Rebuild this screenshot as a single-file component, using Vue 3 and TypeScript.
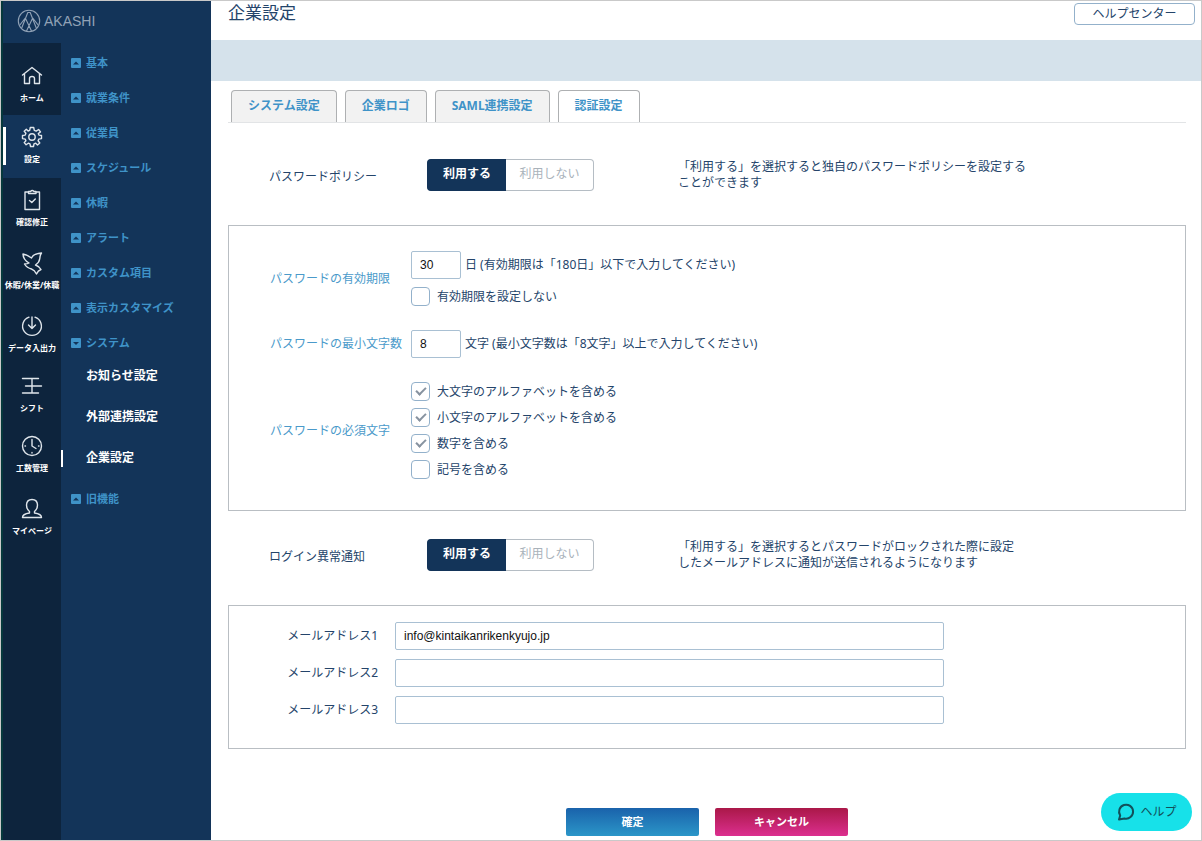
<script setup lang="ts">
import { ref } from 'vue'

interface RailItem {
  label: string
  icon: string
  kind?: 'first' | 'active' | 'compact'
}

interface CharRule {
  label: string
  checked: boolean
}

const railItems: RailItem[] = [
  { label: 'ホーム', icon: 'home', kind: 'first' },
  { label: '設定', icon: 'gear', kind: 'active' },
  { label: '確認修正', icon: 'clipboard' },
  { label: '休暇/休業/休職', icon: 'bird' },
  { label: 'データ入出力', icon: 'download', kind: 'compact' },
  { label: 'シフト', icon: 'shift', kind: 'compact' },
  { label: '工数管理', icon: 'clock' },
  { label: 'マイページ', icon: 'person' },
]

const groups: string[] = [
  '基本',
  '就業条件',
  '従業員',
  'スケジュール',
  '休暇',
  'アラート',
  'カスタム項目',
  '表示カスタマイズ',
  'システム',
  '旧機能',
]
const openGroup = 'システム'
const systemPages: string[] = ['お知らせ設定', '外部連携設定', '企業設定']
const currentPage = '企業設定'

const tabs: string[] = ['システム設定', '企業ロゴ', 'SAML連携設定', '認証設定']
const activeTab = ref('認証設定')

const usePolicy = ref(true)
const useAlert = ref(true)
const expiryDays = ref('30')
const noExpiry = ref(false)
const minLength = ref('8')
const charRules = ref<CharRule[]>([
  { label: '大文字のアルファベットを含める', checked: true },
  { label: '小文字のアルファベットを含める', checked: true },
  { label: '数字を含める', checked: true },
  { label: '記号を含める', checked: false },
])
const mails = ref<string[]>(['info@kintaikanrikenkyujo.jp', '', ''])
</script>

<template>
  <div class="frame">
    <aside class="sidebar">
      <a class="brand" href="#">
        <svg width="24" height="24" viewBox="0 0 24 24" fill="none" stroke="currentColor" stroke-width="1.1" stroke-linejoin="round" aria-hidden="true">
          <circle cx="12" cy="12" r="10.7" />
          <path d="M4.500 19.500 L10.800 3.500 H13.200 L19.500 19.500 M2.500 16.500 L8.300 9 L14.500 22 M21.500 16.500 L15.700 9 L9.500 22" />
        </svg>
        <span>AKASHI</span>
      </a>
      <div class="navs">
        <nav class="rail" aria-label="メイン">
          <a v-for="item in railItems" :key="item.label" href="#" class="rail-item" :class="item.kind">
            <svg class="rail-icon" width="24" height="24" viewBox="0 0 24 24" fill="none" stroke="currentColor" stroke-width="1.4" stroke-linejoin="round" stroke-linecap="round" aria-hidden="true">
              <path v-if="item.icon === 'home'" d="M2.500 11 L12 3.500 L21.500 11 M4.500 9.700 V19.500 H9.500 V14.500 Q9.500 12.500 12 12.500 Q14.500 12.500 14.500 14.500 V19.500 H19.500 V9.700" />
              <template v-else-if="item.icon === 'gear'">
                <circle cx="12" cy="12" r="3.200" />
                <path d="M10.300 2.500 H13.700 L14.300 5.300 L16.200 6.100 L18.600 4.500 L20.500 6.900 L18.300 8.500 L18.900 10.100 L21.500 10.500 V13.600 L18.800 14.100 L18.100 15.800 L19.800 18 L17.500 20 L15.700 18.200 L14 18.900 L13.500 21.500 H10.500 L10 18.900 L8.300 18.200 L6.100 19.800 L4.200 17.600 L5.900 15.700 L5.200 14.100 L2.500 13.600 V10.500 L5.200 10.100 L5.900 8.300 L4.200 6.200 L6.300 4.200 L8.100 6 L9.700 5.300 Z" />
              </template>
              <path v-else-if="item.icon === 'clipboard'" d="M8.500 4 H5 V21.500 H19.500 V4 H16 M8.500 5.500 V3.500 H10.500 Q12.200 1.500 14 3.500 H16 V5.500 Z M9.500 12.500 L11.800 14.500 L15.300 11" />
              <path v-else-if="item.icon === 'bird'" d="M3 3 Q7 3.500 11.500 7 Q13.500 2.500 21.500 2 Q20 4 19.800 7.500 Q19.300 11.500 15.500 14 Q19.500 15.500 21 18.500 Q18 19.500 16.500 23 Q14.500 19 11.500 18 Q7 17 4.500 13 Q7.500 13 9 12 Q3 8.500 3 3 Z" />
              <path v-else-if="item.icon === 'download'" d="M9 3.100 A9.400 9.400 0 1 0 15 3.100 M12 3 V14.500 M8.500 11 L12 14.500 L15.500 11" />
              <path v-else-if="item.icon === 'shift'" d="M2.500 4.500 H18.500 M5.500 12 H21.500 M2.500 19 H18.500 M12 4.500 V19" />
              <path v-else-if="item.icon === 'clock'" d="M21.500 12 A9.500 9.500 0 1 1 2.500 12 A9.500 9.500 0 1 1 21.500 12 M12 5.500 V12 L16 14.500 M12 18.500 V19 M5 12 H5.500 M18.500 12 H19" />
              <path v-else d="M9.500 14.500 Q6.500 12 6.500 8 Q6.700 2.500 12 2.500 Q17.300 2.500 17.500 8 Q17.500 12 14.500 14.500 V16 Q21.500 17 21.500 20.500 H2.500 Q2.500 17 9.500 16 Z" />
            </svg>
            <span>{{ item.label }}</span>
          </a>
        </nav>
        <nav class="menu" aria-label="設定">
          <template v-for="group in groups" :key="group">
            <button type="button" class="group" :aria-expanded="group === openGroup">
              <svg width="10" height="10" viewBox="0 0 10 10" aria-hidden="true">
                <rect width="10" height="10" rx="1" fill="#3f93c8" />
                <path :d="group === openGroup ? 'M2 4 H8 L5 7 Z' : 'M2 6.500 H8 L5 3.500 Z'" fill="#133459" />
              </svg>
              <span>{{ group }}</span>
            </button>
            <div v-if="group === openGroup" class="pages">
              <a v-for="page in systemPages" :key="page" href="#" class="page-link" :class="{ current: page === currentPage }">{{ page }}</a>
            </div>
          </template>
        </nav>
      </div>
    </aside>

    <div class="main">
      <header class="topbar">
        <h1>企業設定</h1>
        <button type="button" class="help-center">ヘルプセンター</button>
      </header>
      <div class="band"></div>

      <main class="content">
        <div class="tabs" role="tablist">
          <button
            v-for="tab in tabs"
            :key="tab"
            type="button"
            role="tab"
            class="tab"
            :class="{ selected: tab === activeTab }"
            :aria-selected="tab === activeTab"
            @click="activeTab = tab"
          >{{ tab }}</button>
        </div>

        <section class="option policy">
          <span class="option-name">パスワードポリシー</span>
          <div class="toggle" role="group" aria-label="パスワードポリシー">
            <button type="button" :class="{ on: usePolicy }" :aria-pressed="usePolicy" @click="usePolicy = true">利用する</button>
            <button type="button" :class="{ on: !usePolicy }" :aria-pressed="!usePolicy" @click="usePolicy = false">利用しない</button>
          </div>
          <p class="hint">「利用する」を選択すると独自のパスワードポリシーを設定する<br />ことができます</p>
        </section>

        <section class="box rules">
          <div class="rule">
            <label class="rule-name" for="expiry">パスワードの有効期限</label>
            <div class="expiry-fields">
              <div class="inline">
                <input id="expiry" v-model="expiryDays" type="text" class="text small" />
                <span>日 (有効期限は「180日」以下で入力してください)</span>
              </div>
              <label class="check"><input v-model="noExpiry" type="checkbox" /><span>有効期限を設定しない</span></label>
            </div>
          </div>
          <div class="rule">
            <label class="rule-name" for="minimum">パスワードの最小文字数</label>
            <div class="inline">
              <input id="minimum" v-model="minLength" type="text" class="text small" />
              <span>文字 (最小文字数は「8文字」以上で入力してください)</span>
            </div>
          </div>
          <div class="rule">
            <span class="rule-name">パスワードの必須文字</span>
            <div class="checks">
              <label v-for="rule in charRules" :key="rule.label" class="check"><input v-model="rule.checked" type="checkbox" /><span>{{ rule.label }}</span></label>
            </div>
          </div>
        </section>

        <section class="option">
          <span class="option-name">ログイン異常通知</span>
          <div class="toggle" role="group" aria-label="ログイン異常通知">
            <button type="button" :class="{ on: useAlert }" :aria-pressed="useAlert" @click="useAlert = true">利用する</button>
            <button type="button" :class="{ on: !useAlert }" :aria-pressed="!useAlert" @click="useAlert = false">利用しない</button>
          </div>
          <p class="hint">「利用する」を選択するとパスワードがロックされた際に設定<br />したメールアドレスに通知が送信されるようになります</p>
        </section>

        <section class="box mails">
          <div v-for="(_, i) in mails" :key="i" class="mail">
            <label :for="'mail' + i">メールアドレス{{ i + 1 }}</label>
            <input :id="'mail' + i" v-model="mails[i]" type="text" class="text" />
          </div>
        </section>

        <div class="actions">
          <button type="button" class="action ok">確定</button>
          <button type="button" class="action cancel">キャンセル</button>
        </div>
      </main>
    </div>

    <button type="button" class="help">
      <svg width="20" height="20" viewBox="0 0 20 20" fill="none" stroke="currentColor" stroke-width="2" stroke-linejoin="round" aria-hidden="true">
        <path d="M3 17.500 L4.200 13.500 A7 7 0 1 1 8.500 16.500 Z" />
      </svg>
      <span>ヘルプ</span>
    </button>
  </div>
</template>

<style>
body {
  margin: 0;
  background: #fff;
}
</style>

<style scoped>
.frame {
  box-sizing: border-box;
  min-height: 100vh;
  display: flex;
  border: 1px solid #c9c9c9;
  background: #fff;
  color: #24446a;
  font-family: "Noto Sans", "Noto Sans CJK JP", sans-serif;
  font-size: 12px;
  line-height: 16px;
}
.frame * {
  box-sizing: border-box;
}
button,
input {
  margin: 0;
  padding: 0;
  font: inherit;
  color: inherit;
  background: none;
  border: 0;
}
button {
  cursor: pointer;
  white-space: nowrap;
}
a {
  color: inherit;
  text-decoration: none;
}
.sidebar {
  flex: 0 0 210px;
  display: flex;
  flex-direction: column;
  border-left: 2px solid #06383c;
  background: #133459;
}
.brand {
  height: 42px;
  padding: 0 0 2px 14px;
  display: flex;
  align-items: center;
  gap: 3px;
  color: #91a2b6;
  font: 14px/16px "Liberation Sans", Arial, sans-serif;
}
.navs {
  flex: 1;
  display: flex;
}
.rail {
  flex: 0 0 58px;
  background: #0d243d;
  color: #fff;
}
.rail-item {
  position: relative;
  height: 63px;
  padding-top: 10px;
  display: flex;
  flex-direction: column;
  align-items: center;
  gap: 4px;
  font-size: 8px;
  font-weight: 700;
  line-height: 12px;
  white-space: nowrap;
}
.rail-icon {
  flex: none;
  color: #dfe5eb;
}
.rail-item.first {
  height: 72px;
  padding-top: 21px;
}
.rail-item.compact {
  height: 60px;
}
.rail-item.active {
  background: #133459;
}
.rail-item.active::before {
  content: "";
  position: absolute;
  left: 0;
  top: 12px;
  width: 3px;
  height: 38px;
  background: #fff;
}
.menu {
  flex: 1;
  padding-top: 2px;
}
.group {
  width: 100%;
  height: 35px;
  padding-left: 10px;
  display: flex;
  align-items: center;
  gap: 5px;
  color: #3f93c8;
  font-size: 11px;
  font-weight: 700;
}
.pages {
  display: grid;
  gap: 13px;
  margin: 2px 0 9px;
}
.page-link {
  position: relative;
  height: 28px;
  padding-left: 25px;
  color: #fff;
  font-weight: 700;
  line-height: 28px;
}
.page-link.current::before {
  content: "";
  position: absolute;
  left: 0;
  top: 6px;
  width: 2px;
  height: 17px;
  background: #fff;
}
.main {
  flex: 1;
  min-width: 0;
}
.topbar {
  height: 39px;
  padding: 2px 6px 0 17px;
  display: flex;
  align-items: flex-start;
  justify-content: space-between;
}
h1 {
  margin: 0;
  font-size: 17px;
  font-weight: 400;
  line-height: 20px;
}
.help-center {
  width: 121px;
  height: 22px;
  border: 1px solid #93b1cb;
  border-radius: 4px;
}
.band {
  height: 41px;
  background: #d5e2eb;
}
.content {
  padding: 9px 15px 4px 17px;
}
.tabs {
  height: 33px;
  padding-left: 3px;
  display: flex;
  gap: 8px;
  border-bottom: 1px solid #e2e4e6;
}
.tab {
  height: 32px;
  padding: 0 16px 2px;
  border: 1px solid #aeb0b2;
  border-bottom: 0;
  border-radius: 4px 4px 0 0;
  background: #f2f2f2;
  color: #3f93c8;
  font-weight: 700;
}
.tab.selected {
  background: #fff;
}
.option {
  height: 32px;
  margin: 28px 0 34px;
  padding-left: 41px;
  display: grid;
  grid-template-columns: 158px 251px 1fr;
  align-items: center;
}
.option.policy {
  margin-top: 36px;
}
.option-name {
  padding-top: 4px;
}
.toggle {
  width: 167px;
  height: 32px;
  display: flex;
}
.toggle button {
  flex: 1 1 88px;
  padding-bottom: 3px;
  border: 1px solid #b5bdc4;
  border-left: 0;
  border-radius: 0 4px 4px 0;
  color: #a9b2ba;
}
.toggle button:first-child {
  flex-basis: 79px;
  border-left: 1px solid #b5bdc4;
  border-right: 0;
  border-radius: 4px 0 0 4px;
}
.toggle button.on {
  border-color: #133459;
  background: #133459;
  color: #fff;
  font-weight: 700;
}
.hint {
  margin: 0;
  white-space: nowrap;
}
.box {
  border: 1px solid #b9bec3;
}
.rules {
  padding: 25px 24px 31px 41px;
  display: grid;
  gap: 24px;
}
.rule {
  display: grid;
  grid-template-columns: 133px 1fr;
  gap: 8px;
  align-items: center;
}
.rule-name {
  color: #4a9aca;
  white-space: nowrap;
}
.expiry-fields {
  display: grid;
  gap: 8px;
}
.inline {
  display: flex;
  align-items: center;
  gap: 4px;
}
.text {
  height: 28px;
  padding: 0 8px;
  border: 1px solid #a9c0d3;
  border-radius: 2px;
  background: #fff;
  color: #111;
  font: 12px/16px "Liberation Sans", Arial, sans-serif;
}
.text.small {
  width: 50px;
}
.checks {
  display: grid;
  gap: 7px;
}
.check {
  height: 19px;
  display: flex;
  align-items: center;
  gap: 7px;
}
.check input {
  appearance: none;
  width: 19px;
  height: 19px;
  display: grid;
  place-items: center;
  border: 1px solid #93b1cb;
  border-radius: 4px;
  background: #fff;
}
.check input:checked::after {
  content: "";
  width: 4px;
  height: 8px;
  margin-bottom: 3px;
  border: solid #8793a0;
  border-width: 0 2px 2px 0;
  transform: rotate(45deg);
}
.mails {
  padding: 16px 24px 24px 58px;
  display: grid;
  gap: 9px;
}
.mail {
  display: grid;
  grid-template-columns: 91px minmax(0, 549px);
  gap: 17px;
  align-items: center;
}
.mail label {
  text-align: right;
  white-space: nowrap;
}
.actions {
  margin-top: 59px;
  display: flex;
  justify-content: center;
  gap: 16px;
}
.action {
  width: 133px;
  height: 28px;
  border-radius: 2px;
  color: #fff;
  font-size: 11px;
  font-weight: 700;
}
.ok {
  background: linear-gradient(#1a62ab, #2b96c8);
}
.cancel {
  background: linear-gradient(#aa1848, #dc2f8f);
}
.help {
  position: fixed;
  right: 10px;
  bottom: 10px;
  width: 91px;
  height: 38px;
  display: flex;
  align-items: center;
  justify-content: center;
  gap: 4px;
  border-radius: 19px;
  background: #17e1e9;
  color: #12505a;
}
</style>
